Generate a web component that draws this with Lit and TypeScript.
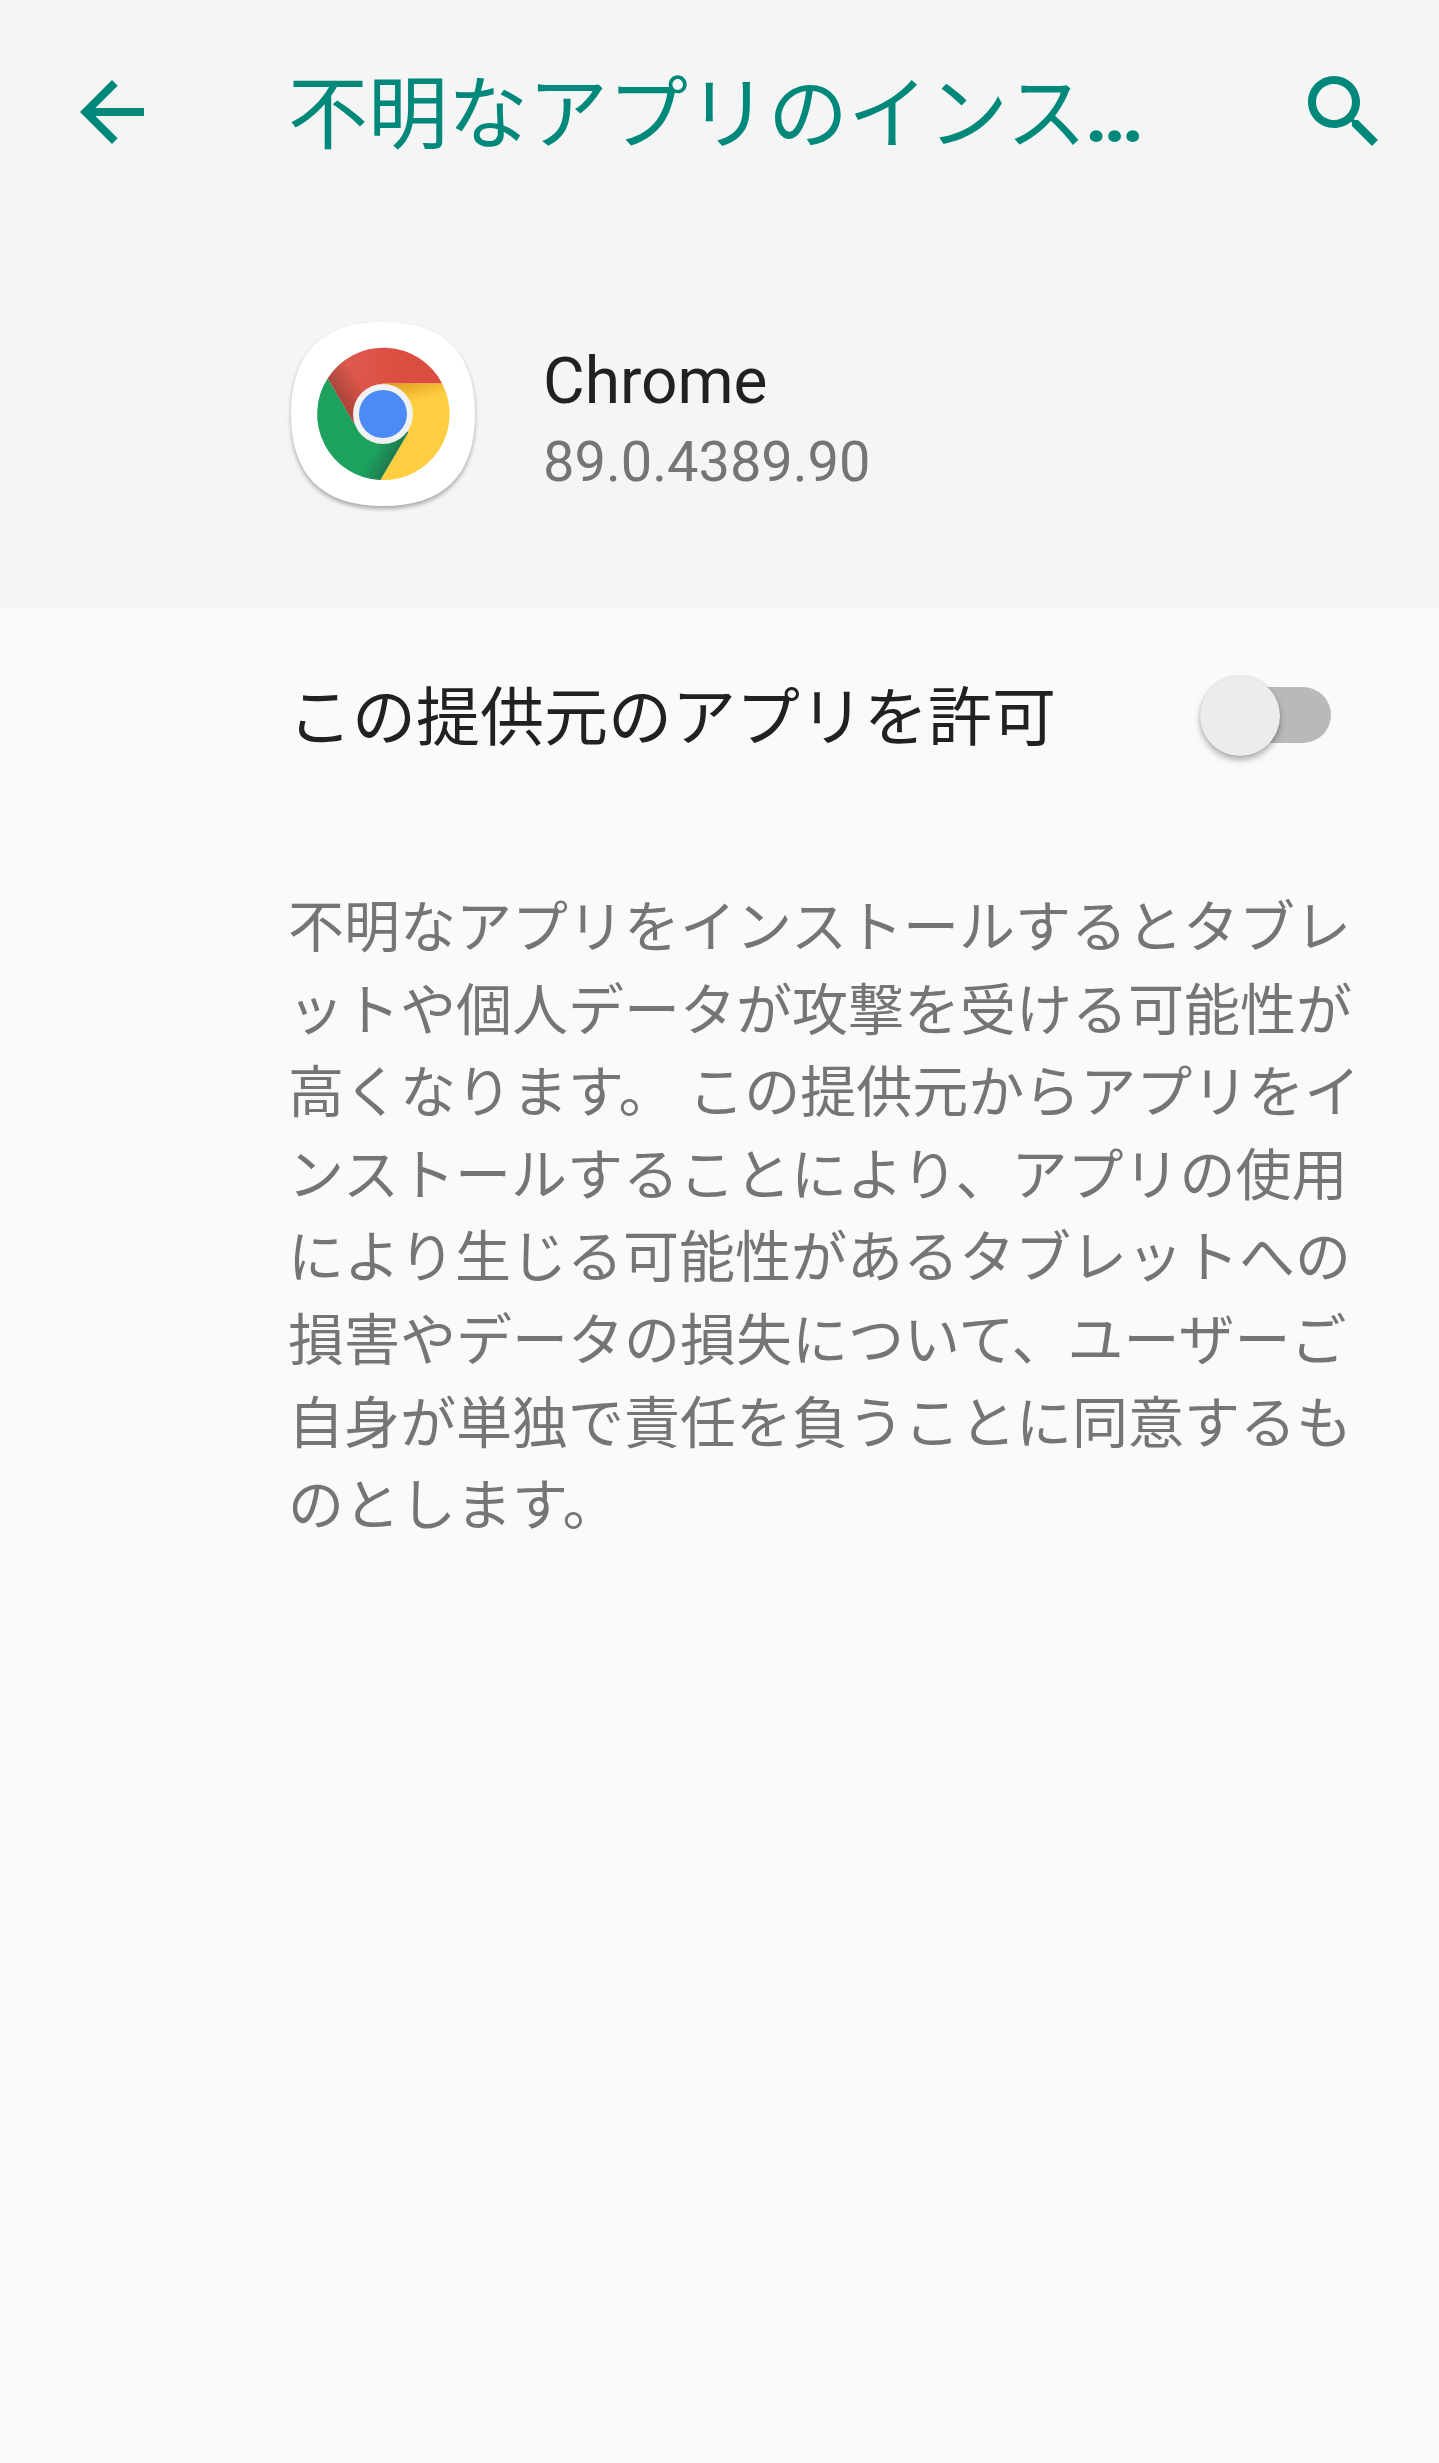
import { LitElement, html, css } from "lit";
import { customElement } from "lit/decorators.js";

@customElement("app-root")
export class AppRoot extends LitElement {
  static styles = css`
    :host { display: block; width: 1439px; height: 2463px; background: #fafafa; overflow: hidden;
      font-family: Roboto, "Noto Sans CJK JP", sans-serif; }
    .head { background: #f5f5f5; height: 608px; box-sizing: border-box; display: flex; flex-direction: column; }
    .bar { height: 224px; display: flex; align-items: center; flex: none; }
    .back { margin-left: 64px; width: 96px; height: 96px; flex: none; }
    .title { margin-left: 128px; width: 880px; flex: none; font-size: 80px; line-height: 100px; color: #00897b;
      white-space: nowrap; font-weight: 400; padding-top: 6px; }
    .dots { font-weight: 700; letter-spacing: -1px; margin-left: -2px; }
    .search { margin-left: 128px; width: 96px; height: 96px; flex: none; }
    .app { display: flex; align-items: center; margin-left: 291px; margin-top: 98px; }
    .icon { width: 184px; height: 184px; flex: none; filter: drop-shadow(0 3px 2px rgba(0,0,0,.3)); }
    .info { margin-left: 68px; padding-top: 16px; }
    .name { font-size: 64px; line-height: 80px; color: #212121; }
    .ver { font-size: 56px; line-height: 80px; color: #757575; }
    .row { display: flex; align-items: center; height: 213px; padding-left: 288px; }
    .label { font-size: 64px; line-height: 90px; color: #212121; flex: none; width: 927px; white-space: nowrap; padding-top: 8px; }
    .switch { position: relative; width: 116px; height: 56px; background: #b9b9b9; border-radius: 28px; flex: none; }
    .thumb { position: absolute; left: -15px; top: -11px; width: 80px; height: 80px; border-radius: 50%; background: #ececec;
      box-shadow: 0 4px 6px rgba(0,0,0,.3), 0 0 2px rgba(0,0,0,.15); }
    .desc { margin: 66px 0 0; padding: 0 0 0 288px; width: 1080px; font-size: 56px; line-height: 82.6px; color: #757575; }
  `;

  render() {
    const red = "M-55.3 -35.7A66 66 0 0 1 59 -30.7L0 -30.7L-29 9.3Z";
    const yellow = "M59 -30.7A66 66 0 0 1 -2.7 66L25.7 17.7L0 -30.7Z";
    const green = "M-55.3 -35.7A66 66 0 0 0 -2.7 66L25.7 17.7L-29 9.3Z";
    return html`
      <div class="head">
        <div class="bar">
          <svg class="back" viewBox="0 0 24 24"><path fill="#00897b" d="M20 11H7.83l5.59-5.59L12 4l-8 8 8 8 1.41-1.41L7.83 13H20v-2z"/></svg>
          <div class="title">不明なアプリのインス<span class="dots">…</span></div>
          <svg class="search" viewBox="0 0 24 24"><path fill="#00897b" d="M15.5 14h-.79l-.28-.27C15.41 12.59 16 11.11 16 9.5 16 5.91 13.09 3 9.5 3S3 5.91 3 9.5 5.91 16 9.5 16c1.61 0 3.09-.59 4.23-1.57l.27.28v.79l5 4.99L20.49 19l-4.99-5zm-6 0C7.01 14 5 11.99 5 9.5S7.01 5 9.5 5 14 7.01 14 9.5 11.99 14 9.5 14z"/></svg>
        </div>
        <div class="app">
          <svg class="icon" viewBox="0 0 184 184">
            <defs>
              <linearGradient id="rsh" gradientUnits="userSpaceOnUse" x1="-42" y1="-13" x2="-20" y2="-26"><stop offset="0" stop-color="#3e2723" stop-opacity=".32"/><stop offset="1" stop-color="#3e2723" stop-opacity="0"/></linearGradient>
              <linearGradient id="gsh" gradientUnits="userSpaceOnUse" x1="11.5" y1="42" x2="-6" y2="32"><stop offset="0" stop-color="#263238" stop-opacity=".35"/><stop offset="1" stop-color="#263238" stop-opacity="0"/></linearGradient>
              <linearGradient id="ysh" gradientUnits="userSpaceOnUse" x1="18" y1="-31" x2="24" y2="-10"><stop offset="0" stop-color="#bf6f00" stop-opacity=".45"/><stop offset="1" stop-color="#bf6f00" stop-opacity="0"/></linearGradient>
              <radialGradient id="rhi" gradientUnits="userSpaceOnUse" cx="-40" cy="-50" r="60"><stop offset="0" stop-color="#fff" stop-opacity=".08"/><stop offset="1" stop-color="#fff" stop-opacity="0"/></radialGradient>
            </defs>
            <path fill="#fff" d="M92 0C153 0 184 31 184 92C184 153 153 184 92 184C31 184 0 153 0 92C0 31 31 0 92 0Z"/>
            <g transform="translate(92 92)">
              <path fill="#ffcd40" d=${yellow}/>
              <path fill="url(#ysh)" d=${yellow}/>
              <path fill="#1ca25e" d=${green}/>
              <path fill="url(#gsh)" d=${green}/>
              <path fill="#db4d40" d=${red}/>
              <path fill="url(#rhi)" d=${red}/>
              <path fill="url(#rsh)" d=${red}/>
              <circle r="30" fill="#f1f1f1"/>
              <circle r="24" fill="#4c8bf5"/>
            </g>
          </svg>
          <div class="info">
            <div class="name">Chrome</div>
            <div class="ver">89.0.4389.90</div>
          </div>
        </div>
      </div>
      <div class="row">
        <div class="label">この提供元のアプリを許可</div>
        <div class="switch"><div class="thumb"></div></div>
      </div>
      <p class="desc">不明なアプリをインストールするとタブレットや個人データが攻撃を受ける可能性が高くなります。 この提供元からアプリをインストールすることにより、アプリの使用により生じる可能性があるタブレットへの損害やデータの損失について、ユーザーご自身が単独で責任を負うことに同意するものとします。</p>
    `;
  }
}
